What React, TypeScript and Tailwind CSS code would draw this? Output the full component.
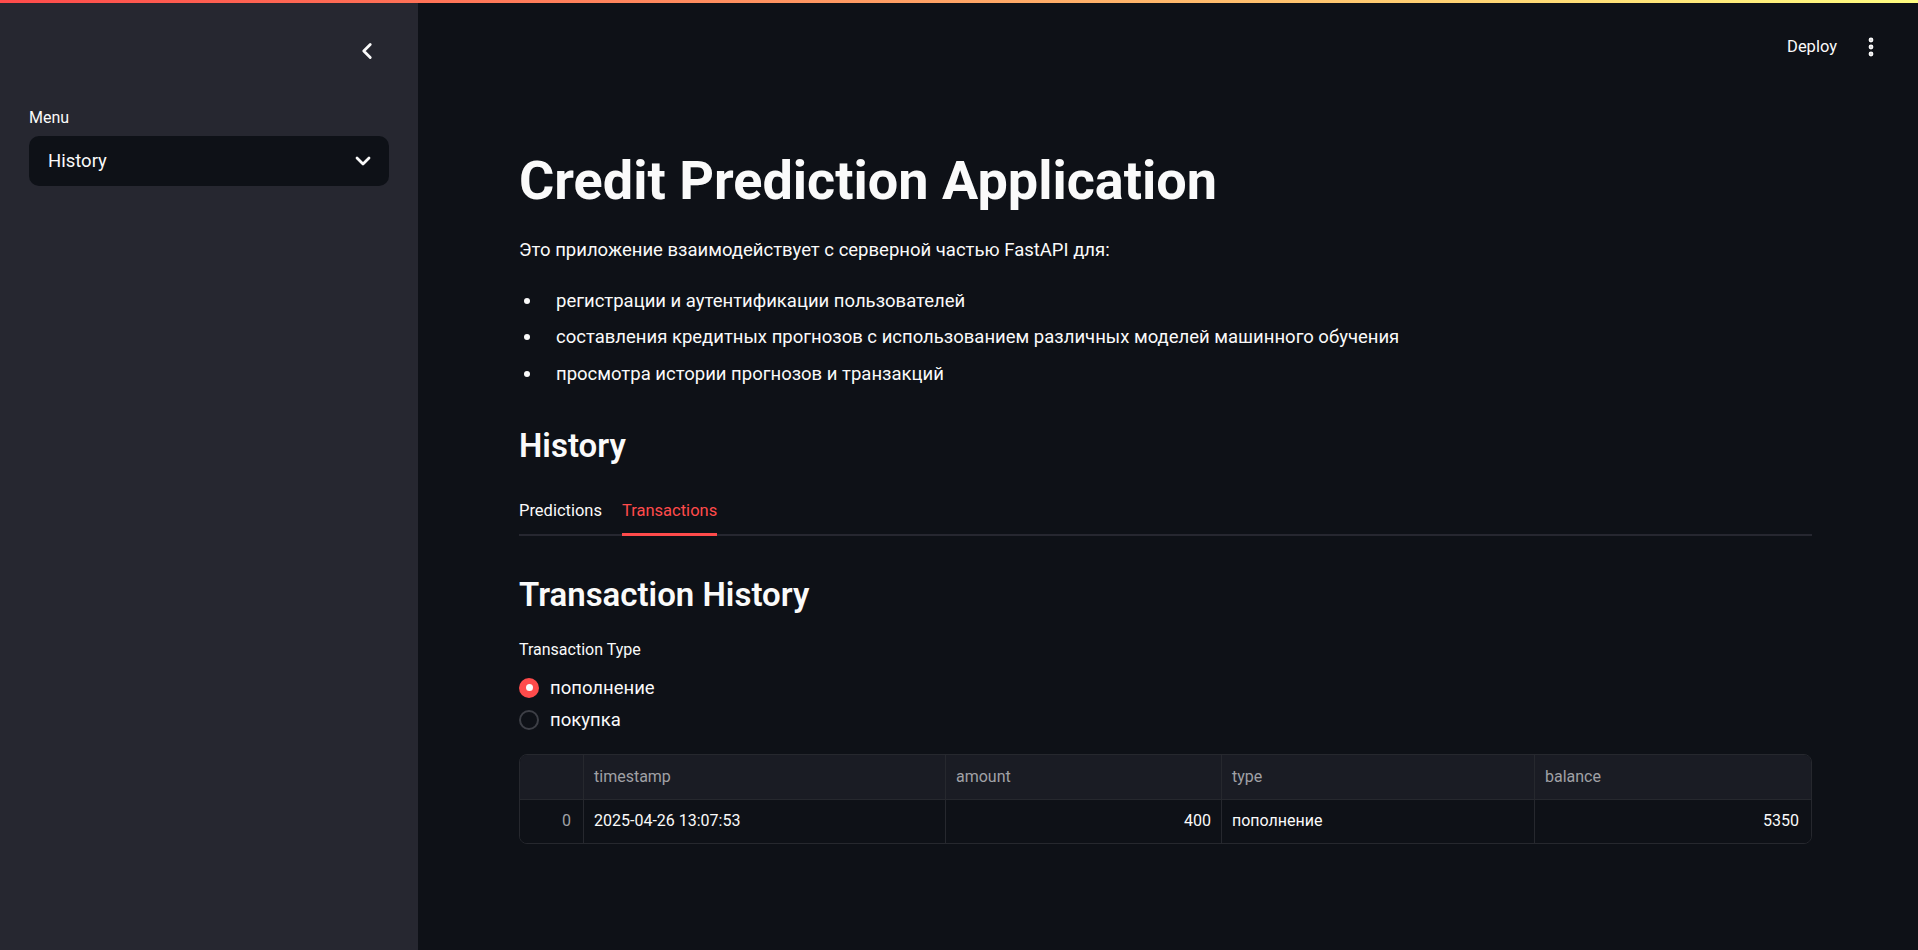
import { ChevronLeft, ChevronDown, EllipsisVertical } from "lucide-react";

const bullets = [
  "регистрации и аутентификации пользователей",
  "составления кредитных прогнозов с использованием различных моделей машинного обучения",
  "просмотра истории прогнозов и транзакций",
];

export default function App() {
  return (
    <div className="flex h-[950px] w-full flex-col overflow-hidden bg-[#0e1117] font-['Roboto','Noto_Sans',sans-serif] text-[#fafafa]">
      <div className="h-[3px] w-full shrink-0 bg-[linear-gradient(90deg,#ff4b4b,#fffd80)]" />
      <div className="flex min-h-0 flex-1">
        <aside className="flex w-[418px] shrink-0 flex-col bg-[#262730] px-[29px]">
          <div className="flex h-[102.5px] shrink-0 items-start justify-end pr-[9.5px] pt-[34.5px]">
            <ChevronLeft size={26} strokeWidth={2.6} className="text-[#fafafa]" />
          </div>
          <div className="text-[16px] leading-[24px]">Menu</div>
          <div className="mt-[6.5px] flex h-[50px] items-center justify-between rounded-[10px] bg-[#0e1117] pl-[19px] pr-[14px]">
            <span className="text-[18.5px] leading-[28px]">History</span>
            <ChevronDown size={24} strokeWidth={2.8} />
          </div>
        </aside>

        <main className="flex min-w-0 flex-1 flex-col">
          <header className="flex h-[87px] shrink-0 items-center justify-end gap-[22px] pr-[35px] pt-[1px]">
            <span className="text-[16.5px] font-normal leading-[24px]">Deploy</span>
            <EllipsisVertical size={24} strokeWidth={2.8} />
          </header>

          <div className="flex flex-col pl-[101px] pr-[106px]">
            <h1 className="mt-[61px] text-[54px] font-bold leading-[60px]">
              Credit Prediction Application
            </h1>
            <p className="mt-[24.5px] text-[18.5px] leading-[28px]">
              Это приложение взаимодействует с серверной частью FastAPI для:
            </p>
            <ul className="mt-[23px] flex flex-col gap-[8.5px]">
              {bullets.map((b) => (
                <li key={b} className="flex items-center text-[18.5px] leading-[28px]">
                  <span className="flex w-[37px] shrink-0">
                    <span className="ml-[5px] h-[6px] w-[6px] rounded-full bg-[#fafafa]" />
                  </span>
                  <span>{b}</span>
                </li>
              ))}
            </ul>

            <h3 className="mt-[38px] text-[33px] font-semibold leading-[40px]">History</h3>

            <div className="mt-[33px] flex gap-[20px] border-b-2 border-[#262730]">
              <div className="pb-[11.5px] text-[16.5px] leading-[24px] text-[#fafafa]">Predictions</div>
              <div className="-mb-[2px] border-b-[3px] border-[#ff4b4b] pb-[10.5px] text-[16.5px] leading-[24px] text-[#ff4b4b]">
                Transactions
              </div>
            </div>

            <h2 className="mt-[39px] text-[33px] font-semibold leading-[40px]">Transaction History</h2>

            <div className="mt-[22.5px] text-[16px] leading-[24px]">Transaction Type</div>

            <div className="mt-[12px] flex flex-col gap-[4px]">
              <div className="flex h-[28px] items-center gap-[11px]">
                <span className="flex h-[20px] w-[20px] items-center justify-center rounded-full bg-[#ff4b4b]">
                  <span className="h-[7px] w-[7px] rounded-full bg-[#fafafa]" />
                </span>
                <span className="text-[18.5px] leading-[28px]">пополнение</span>
              </div>
              <div className="flex h-[28px] items-center gap-[11px]">
                <span className="h-[20px] w-[20px] rounded-full border-2 border-[#3d3f46]" />
                <span className="text-[18.5px] leading-[28px]">покупка</span>
              </div>
            </div>

            <div className="mt-[20px] overflow-hidden rounded-[8px] border border-[#26282e] text-[16px]">
              <div className="grid h-[45px] grid-cols-[63px_362px_276px_313px_1fr] border-b border-[#26282e] bg-[#1a1c24] text-[#a0a1a6]">
                <div />
                <div className="flex items-center border-l border-[#26282e] pl-[10px] pt-[1px]">timestamp</div>
                <div className="flex items-center border-l border-[#26282e] pl-[10px] pt-[1px]">amount</div>
                <div className="flex items-center border-l border-[#26282e] pl-[10px] pt-[1px]">type</div>
                <div className="flex items-center border-l border-[#26282e] pl-[10px] pt-[1px]">balance</div>
              </div>
              <div className="grid h-[43px] grid-cols-[63px_362px_276px_313px_1fr] bg-[#0e1117]">
                <div className="flex items-center justify-end pr-[12px] text-[#a0a1a6]">0</div>
                <div className="flex items-center border-l border-[#26282e] pl-[10px]">2025-04-26 13:07:53</div>
                <div className="flex items-center justify-end border-l border-[#26282e] pr-[10px]">400</div>
                <div className="flex items-center border-l border-[#26282e] pl-[10px]">пополнение</div>
                <div className="flex items-center justify-end border-l border-[#26282e] pr-[12px]">5350</div>
              </div>
            </div>
          </div>
        </main>
      </div>
    </div>
  );
}
